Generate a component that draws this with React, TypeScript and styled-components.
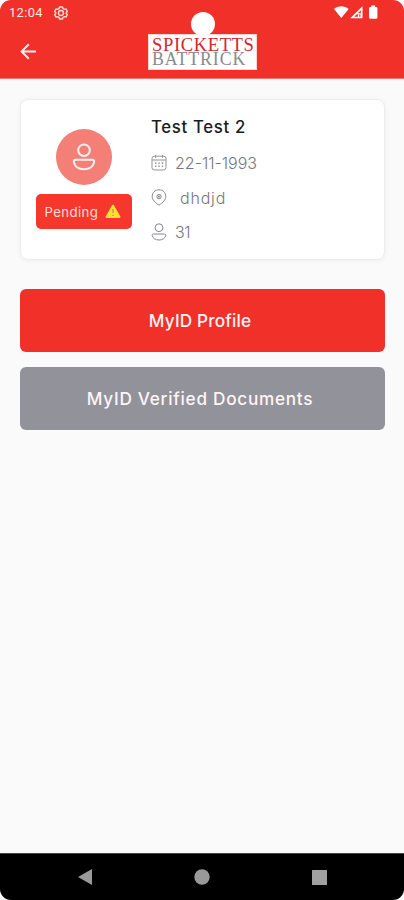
import React from "react";
import styled, { createGlobalStyle } from "styled-components";

const GlobalStyle = createGlobalStyle`
  * { box-sizing: border-box; }
  body { margin: 0; background: #fff; }
`;

const Screen = styled.div`
  width: 404px;
  height: 900px;
  display: flex;
  flex-direction: column;
  overflow: hidden;
  border-radius: 11px;
  background: #fafafa;
  font-family: Inter, "Open Sans", sans-serif;
`;

const Header = styled.header`
  position: relative;
  height: 79px;
  flex: none;
  background: #f13029;
  border-bottom: 1px solid #f4736e;
`;

const StatusBar = styled.div`
  height: 25px;
  padding: 0 26px 0 9px;
  display: flex;
  align-items: center;
  justify-content: space-between;
`;

const StatusGroup = styled.div`
  display: flex;
  align-items: center;
`;

const Clock = styled.span`
  width: 45px;
  font: 400 12.8px/25px Roboto, sans-serif;
  letter-spacing: 0.4px;
  color: #ffe9e7;
`;

const CameraHole = styled.div`
  position: absolute;
  left: 191px;
  top: 12px;
  width: 24px;
  height: 24px;
  border-radius: 50%;
  background: #fff;
`;

const TitleBar = styled.div`
  display: grid;
  grid-template-columns: 128px 109px 1fr;
  padding: 9px 0 0 20px;
  align-items: start;
`;

const BackIcon = styled.svg`
  width: 17px;
  height: 17px;
  margin-top: 9px;
`;

const Logo = styled.div`
  width: 109px;
  height: 36px;
  padding: 2px 0 0 3px;
  background: #fff;
  border: 1px solid #fbd5d2;
  display: flex;
  flex-direction: column;
`;

const LogoLine = styled.div<{ $tone: string; $spacing: string; $size: string }>`
  height: 15px;
  font-family: "Liberation Serif", serif;
  font-size: ${(p) => p.$size};
  line-height: 15px;
  letter-spacing: ${(p) => p.$spacing};
  color: ${(p) => p.$tone};
  white-space: nowrap;
`;

const Content = styled.main`
  flex: 1;
  padding: 20px 19px 0 20px;
  display: flex;
  flex-direction: column;
`;

const Card = styled.section`
  height: 161px;
  margin-bottom: 29px;
  display: flex;
  background: #fff;
  border: 1px solid #ededed;
  border-radius: 8px;
  box-shadow: 0 1px 5px rgba(0, 0, 0, 0.05);
`;

const Identity = styled.div`
  width: 125px;
  padding-top: 29px;
  display: flex;
  flex-direction: column;
  align-items: center;
`;

const Avatar = styled.div`
  width: 56px;
  height: 56px;
  border-radius: 50%;
  background: #f37f76;
  display: flex;
  align-items: center;
  justify-content: center;
`;

const Badge = styled.div`
  width: 96px;
  height: 35px;
  margin-top: 9px;
  padding: 0 11px 0 9px;
  border-radius: 5px;
  background: #f5372d;
  color: #ffdfdc;
  display: flex;
  align-items: center;
  justify-content: space-between;
  font-size: 13.2px;
  letter-spacing: 0.4px;
`;

const Details = styled.div`
  padding: 10px 0 0 5px;
  display: flex;
  flex-direction: column;
`;

const Name = styled.h1`
  margin: 0 0 1px;
  height: 35px;
  font-size: 16.8px;
  line-height: 35px;
  font-weight: 500;
  letter-spacing: 0.65px;
  color: #1c1c1c;
`;

const Detail = styled.div<{ $gap?: number; $spacing?: number }>`
  height: 34.5px;
  display: flex;
  align-items: center;
  gap: ${(p) => p.$gap ?? 8}px;
  font-size: 16px;
  font-weight: 300;
  letter-spacing: ${(p) => p.$spacing ?? 0}px;
  color: #77777e;
`;

const Action = styled.button<{ $color: string; $spacing: number }>`
  width: 100%;
  height: 63px;
  margin: 0 0 15px;
  padding: 0 5px 0 0;
  border: 0;
  border-radius: 6px;
  background: ${(p) => p.$color};
  color: #fff5f5;
  font: 500 17.2px/63px Inter, sans-serif;
  letter-spacing: ${(p) => p.$spacing}px;
`;

const NavBar = styled.nav`
  height: 47px;
  flex: none;
  background: #000;
  border-top: 1px solid #444;
  padding: 0 76px 0 77px;
  display: flex;
  align-items: center;
  justify-content: space-between;
`;

const PersonIcon = () => (
  <svg width="16" height="18" viewBox="0 0 16 18" fill="none" stroke="#88888e" strokeWidth="1" strokeLinejoin="round">
    <circle cx="8" cy="4.7" r="3.9" />
    <path d="M2.6 11H13.4C14.6 11 15 11.7 14.8 12.5C14.1 15.5 11.4 17 8 17S1.9 15.5 1.2 12.5C1 11.7 1.4 11 2.6 11Z" />
  </svg>
);

const CalendarIcon = () => (
  <svg width="16" height="16" viewBox="0 0 16 16" fill="none" stroke="#939398" strokeWidth="1">
    <rect x="1" y="1.2" width="14" height="13.8" rx="2.4" />
    <path d="M1 5H15M4.5 0V2.8M11.5 0V2.8" />
    <path d="M4 8.3H5.4M7.4 8.3H8.8M10.8 8.3H12.2M4 11.3H5.4M7.4 11.3H8.8M10.8 11.3H12.2" strokeWidth="1.4" />
  </svg>
);

const PinIcon = () => (
  <svg width="16" height="17" viewBox="0 0 16 17" fill="none" stroke="#88888e" strokeWidth="1">
    <path d="M8 .8C4 .8 1.2 3.7 1.2 7.3C1.2 11 4 13.5 8 16.2C12 13.5 14.8 11 14.8 7.3C14.8 3.7 12 .8 8 .8Z" />
    <circle cx="8" cy="7.6" r="2.2" />
    <circle cx="8" cy="7.6" r=".7" fill="#88888e" />
  </svg>
);

const WarningIcon = () => (
  <svg width="16" height="15" viewBox="0 0 16 15">
    <path d="M8 1.8L14.4 13H1.6Z" fill="#ffdf35" stroke="#ffdf35" strokeWidth="2.2" strokeLinejoin="round" />
    <path d="M8 5V9M8 10.7V12.1" stroke="#b99a31" strokeWidth="1.3" />
  </svg>
);

const GearIcon = () => (
  <svg width="14" height="14" viewBox="0 0 14 14" fill="none" stroke="#ffe0dd">
    <path d="M5.5 1H8.5L9 2.6L10.6 3.4L12.1 3L13.4 5.5L12.2 6.5V7.5L13.4 8.5L12.1 11L10.6 10.6L9 11.4L8.5 13H5.5L5 11.4L3.4 10.6L1.9 11L.6 8.5L1.8 7.5V6.5L.6 5.5L1.9 3L3.4 3.4L5 2.6Z" strokeWidth="1.4" strokeLinejoin="round" />
    <circle cx="7" cy="7" r="2.5" strokeWidth="1.3" />
  </svg>
);

const StatusIcons = () => (
  <svg width="45" height="15" viewBox="0 0 45 15" fill="#fff">
    <path d="M1 3.9C5.2.4 11.4.4 15.6 3.9L8.3 13Z" />
    <path fillRule="evenodd" d="M29.5 1.2V13.2H17.2ZM27.9 5.2L21.2 11.8H24.8V8.2H27.9Z" />
    <path d="M26 9.2H27.6V11.8H26Z" fill="#f5655f" />
    <path d="M38.3.6H42.1V2H43Q44.4 2 44.4 3.4V12.4Q44.4 13.8 43 13.8H37.4Q36 13.8 36 12.4V3.4Q36 2 37.4 2H38.3Z" />
  </svg>
);

export default function App() {
  return (
    <>
      <GlobalStyle />
      <Screen>
        <Header>
          <StatusBar>
            <StatusGroup>
              <Clock>12:04</Clock>
              <GearIcon />
            </StatusGroup>
            <StatusIcons />
          </StatusBar>
          <CameraHole />
          <TitleBar>
            <BackIcon viewBox="0 0 17 17" fill="none" stroke="#fff0ef" strokeWidth="2">
              <path d="M16 8.5H1.8M8.8 1.3L1.6 8.5L8.8 15.7" />
            </BackIcon>
            <Logo>
              <LogoLine $tone="#cf2930" $size="18.6px" $spacing="0.6px">SPICKETTS</LogoLine>
              <LogoLine $tone="#888b90" $size="17.8px" $spacing="0.9px">BATTRICK</LogoLine>
            </Logo>
          </TitleBar>
        </Header>
        <Content>
          <Card>
            <Identity>
              <Avatar>
                <svg width="24" height="28" viewBox="0 0 24 28" fill="none" stroke="#fff0ee" strokeWidth="2">
                  <circle cx="12" cy="7.2" r="5.8" />
                  <path d="M4 16.8H20C21.8 16.8 22.5 17.8 22.1 19.2C21 23.8 17.2 26.2 12 26.2S3 23.8 1.9 19.2C1.5 17.8 2.2 16.8 4 16.8Z" />
                </svg>
              </Avatar>
              <Badge>
                Pending
                <WarningIcon />
              </Badge>
            </Identity>
            <Details>
              <Name>Test Test 2</Name>
              <Detail><CalendarIcon />22-11-1993</Detail>
              <Detail $gap={13} $spacing={0.8}><PinIcon />dhdjd</Detail>
              <Detail $spacing={-0.5}><PersonIcon />31</Detail>
            </Details>
          </Card>
          <Action $color="#f13029" $spacing={0.15}>MyID Profile</Action>
          <Action $color="#92929b" $spacing={0.72}>MyID Verified Documents</Action>
        </Content>
        <NavBar>
          <svg width="16" height="18" viewBox="0 0 16 18"><path d="M1 9L15 1V17Z" fill="#999" /></svg>
          <svg width="16" height="16" viewBox="0 0 16 16"><circle cx="8" cy="8" r="7.7" fill="#999" /></svg>
          <svg width="17" height="17" viewBox="0 0 17 17"><rect x="1" y="1" width="15" height="15" rx=".5" fill="#a0a0a0" /></svg>
        </NavBar>
      </Screen>
    </>
  );
}
